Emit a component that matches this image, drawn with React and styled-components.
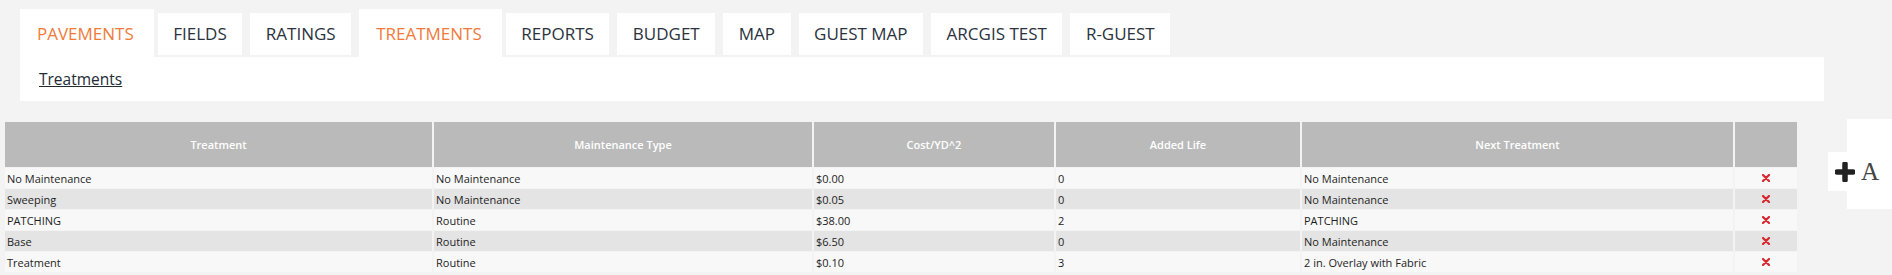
import React from "react";
import styled, { createGlobalStyle } from "styled-components";

const GlobalStyle = createGlobalStyle`
  html, body {
    margin: 0;
    padding: 0;
    background: #f3f3f3;
    font-family: "Open Sans", "Liberation Sans", sans-serif;
  }
`;

const tabs = [
  { label: "PAVEMENTS", active: true },
  { label: "FIELDS" },
  { label: "RATINGS" },
  { label: "TREATMENTS", active: true },
  { label: "REPORTS" },
  { label: "BUDGET" },
  { label: "MAP" },
  { label: "GUEST MAP" },
  { label: "ARCGIS TEST" },
  { label: "R-GUEST" },
];

const rows = [
  ["No Maintenance", "No Maintenance", "$0.00", "0", "No Maintenance"],
  ["Sweeping", "No Maintenance", "$0.05", "0", "No Maintenance"],
  ["PATCHING", "Routine", "$38.00", "2", "PATCHING"],
  ["Base", "Routine", "$6.50", "0", "No Maintenance"],
  ["Treatment", "Routine", "$0.10", "3", "2 in. Overlay with Fabric"],
];

const columns = [
  { title: "Treatment", width: 428 },
  { title: "Maintenance Type", width: 380 },
  { title: "Cost/YD^2", width: 242 },
  { title: "Added Life", width: 246 },
  { title: "Next Treatment", width: 433 },
  { title: "", width: 63 },
];

const RemoveIcon = () => (
  <svg width="8" height="8" viewBox="0 0 8 8">
    <path d="M1 1 L7 7 M7 1 L1 7" stroke="#d8262c" strokeWidth="2.2" strokeLinecap="round" />
  </svg>
);

export default function App() {
  return (
    <>
      <GlobalStyle />
      <Page>
        <Nav>
          <TabBar>
            {tabs.map((t) => (
              <Tab key={t.label} $active={t.active}>
                {t.label}
              </Tab>
            ))}
          </TabBar>
          <SubPanel>
            <SubLink href="#">Treatments</SubLink>
          </SubPanel>
        </Nav>

        <Table>
          <colgroup>
            {columns.map((c, i) => (
              <col key={i} style={{ width: c.width }} />
            ))}
          </colgroup>
          <thead>
            <tr>
              {columns.map((c, i) => (
                <Th key={i}>{c.title}</Th>
              ))}
            </tr>
          </thead>
          <tbody>
            {rows.map((r, i) => (
              <Row key={i} $even={i % 2 === 1}>
                {r.map((cell, j) => (
                  <Td key={j}>{cell}</Td>
                ))}
                <ActionCell>
                  <RemoveIcon />
                </ActionCell>
              </Row>
            ))}
          </tbody>
        </Table>
      </Page>

      <FontWidget>
        <FontButton>
          <svg width="20" height="20" viewBox="0 0 20 20">
            <path d="M10 2 V18 M2 10 H18" stroke="#222" strokeWidth="5.5" strokeLinecap="round" />
          </svg>
          <BigA>A</BigA>
        </FontButton>
      </FontWidget>
    </>
  );
}

const Page = styled.div`
  width: 1892px;
  height: 275px;
  overflow: hidden;
`;

const Nav = styled.div`
  margin: 0 68px 0 20px;
  padding-top: 9px;
`;

const TabBar = styled.div`
  display: flex;
  align-items: flex-end;
`;

const Tab = styled.div`
  background: #fff;
  height: 42px;
  line-height: 42px;
  padding: 0 15.5px;
  margin: 0 8px 2px 0;
  font-size: 17px;
  color: #2a323e;
  white-space: nowrap;

  ${(p) =>
    p.$active &&
    `
    color: #ef7a3a;
    padding: 4px 20px 2px 17px;
    margin: 0 4px 0 0;
  `}
`;

const SubPanel = styled.div`
  background: #fff;
  height: 44px;
  display: flex;
  align-items: center;
  padding-left: 19px;
`;

const SubLink = styled.a`
  font-size: 15.5px;
  color: #222b36;
  text-decoration: underline;
`;

const Table = styled.table`
  margin: 21px 0 0 5px;
  width: 1792px;
  table-layout: fixed;
  border-collapse: collapse;
  font-size: 11px;
`;

const Th = styled.th`
  height: 45px;
  background: #bababa;
  color: #fff;
  font-weight: 600;
  font-size: 11px;
  text-align: center;
  border-left: 2px solid #f3f3f3;
  padding: 0;

  &:first-child {
    border-left: none;
  }
`;

const Row = styled.tr`
  background: ${(p) => (p.$even ? "#e4e4e4" : "#f8f8f8")};
`;

const Td = styled.td`
  height: 20px;
  padding: 0 2px;
  color: #1e1e1e;
  border-left: 2px solid #f3f3f3;
  border-top: 1px solid #f3f3f3;
  white-space: nowrap;

  &:first-child {
    border-left: none;
  }
`;

const ActionCell = styled(Td)`
  text-align: center;
  line-height: 0;
`;

const FontWidget = styled.div`
  position: fixed;
  top: 119px;
  left: 1847px;
  width: 60px;
  height: 90px;
  background: #fff;
`;

const FontButton = styled.div`
  position: absolute;
  top: 33px;
  left: -19px;
  height: 39px;
  padding: 0 8px 0 7px;
  display: flex;
  align-items: center;
  gap: 6px;
  background: #fff;
`;

const BigA = styled.span`
  font-family: "Liberation Serif", serif;
  font-size: 25px;
  color: #444;
  line-height: 1;
`;
